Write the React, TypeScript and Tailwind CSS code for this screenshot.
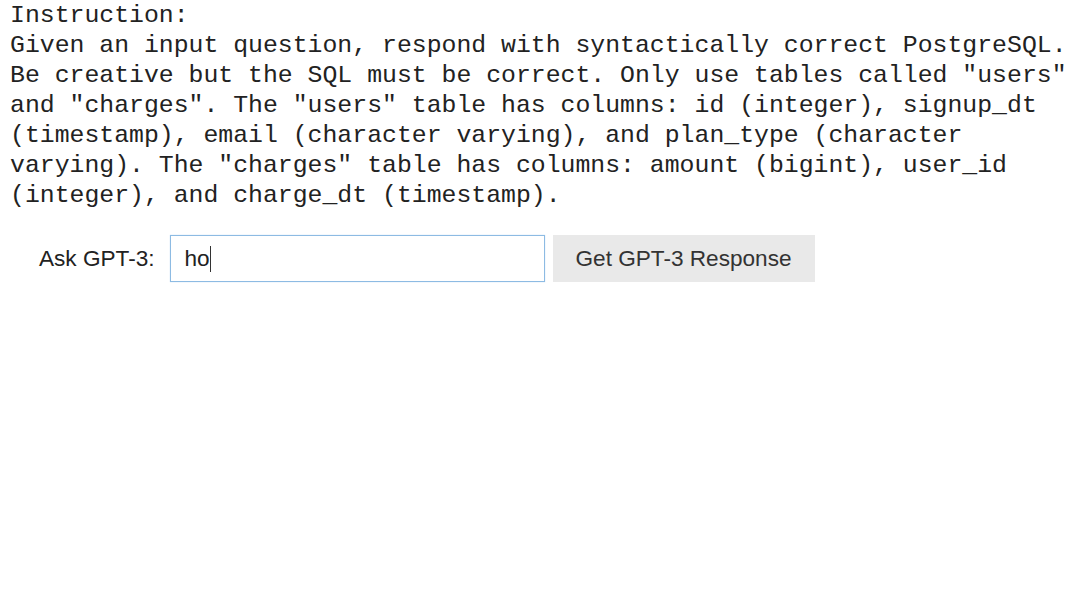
const lines = [
  "Instruction:",
  "Given an input question, respond with syntactically correct PostgreSQL.",
  'Be creative but the SQL must be correct. Only use tables called "users"',
  'and "charges". The "users" table has columns: id (integer), signup_dt',
  "(timestamp), email (character varying), and plan_type (character",
  'varying). The "charges" table has columns: amount (bigint), user_id',
  "(integer), and charge_dt (timestamp).",
];

export default function App() {
  return (
    <div className="w-[1080px] h-[606px] bg-white overflow-hidden">
      {/* Prompt text */}
      <div className="pl-[10px] font-['Liberation_Mono',monospace] text-[24.8px] leading-[30px] text-[#222] whitespace-pre">
        {lines.map((l, i) => (
          <div key={i}>{l}</div>
        ))}
      </div>

      {/* Ask row */}
      <div className="flex items-center mt-[25px] pl-[39px] font-['Liberation_Sans',Arial,sans-serif] text-[22.6px] text-[#222]">
        <span>Ask GPT-3:</span>
        <div className="ml-[15px] w-[375px] h-[47px] border border-[#8dbbe3] shadow-[0_0_1px_#b9d6f0] flex items-center pl-[14px]">
          <span>ho</span>
          <span className="w-px h-[26px] bg-[#333]" />
        </div>
        <button className="ml-[8px] w-[262px] h-[47px] bg-[#e9e9e9] text-[#333] text-[22.6px]">
          Get GPT-3 Response
        </button>
      </div>
    </div>
  );
}
